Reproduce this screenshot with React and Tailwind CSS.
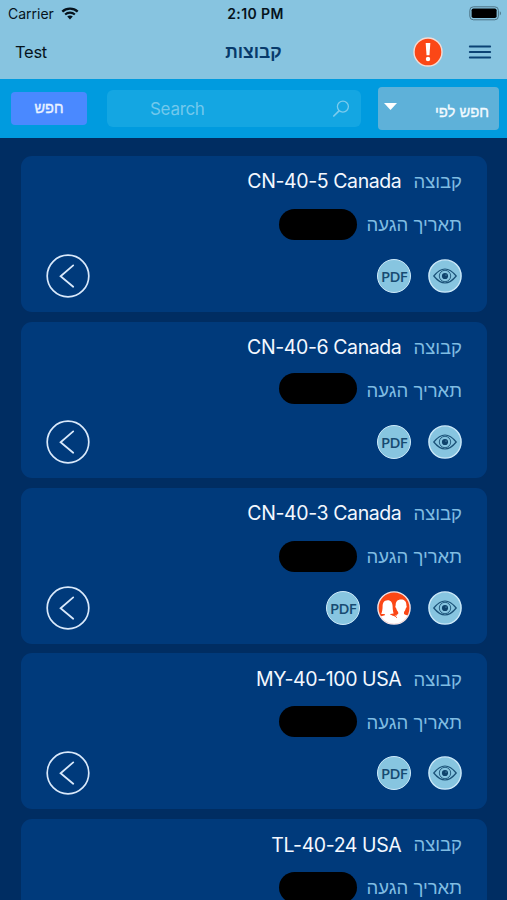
import React, { useState } from 'react';

const groups = [
    { id: 1, name: 'CN-40-5 Canada', hasMembers: false, dateOffset: '' },
    { id: 2, name: 'CN-40-6 Canada', hasMembers: false, dateOffset: 'mb-[3px]' },
    { id: 3, name: 'CN-40-3 Canada', hasMembers: true, dateOffset: '' },
    { id: 4, name: 'MY-40-100 USA', hasMembers: false, dateOffset: '' },
    { id: 5, name: 'TL-40-24 USA', hasMembers: false, dateOffset: '' },
];

const WifiIcon = () => (
    <svg width="18" height="13" viewBox="0 0 18 13" fill="none">
        <path d="M1.3 4.6C5.6 0.6 12.4 0.6 16.7 4.6" stroke="#06131c" strokeWidth="2.3" />
        <path d="M4.1 7.5C6.9 5 11.1 5 13.9 7.5" stroke="#06131c" strokeWidth="2.1" />
        <path d="M9 12.4L6.2 9.6C7.8 8.2 10.2 8.2 11.8 9.6Z" fill="#06131c" />
    </svg>
);

const BatteryIcon = () => (
    <svg width="33" height="15" viewBox="0 0 33 15">
        <rect x="0.8" y="0.8" width="28.6" height="13" rx="3.6" fill="none" stroke="#4d7485" strokeWidth="1" />
        <rect x="2.6" y="2.5" width="25" height="9.6" rx="1.8" fill="#000" />
        <path d="M30.8 5.2C32.3 5.8 32.3 8.8 30.8 9.4Z" fill="#4d7485" />
    </svg>
);

const AlertIcon = () => (
    <svg width="30" height="30" viewBox="0 0 30 30">
        <circle cx="15" cy="15" r="14" fill="#fb4716" stroke="#f3dcd6" strokeWidth="1.4" />
        <path d="M12.7 6H17.3L16.5 18.2H13.5Z" fill="#fff" />
        <circle cx="15" cy="22" r="2.2" fill="#fff" />
    </svg>
);

const MenuIcon = () => (
    <svg width="24" height="16" viewBox="0 0 24 16" stroke="#0b4274" strokeWidth="1.9" strokeLinecap="round">
        <path d="M1.8 2.5H22.2M1.8 8H22.2M1.8 13.5H22.2" />
    </svg>
);

const SearchIcon = () => (
    <svg width="18" height="18" viewBox="0 0 18 18" fill="none" stroke="#7bcbed" strokeWidth="1.3" strokeLinecap="round">
        <circle cx="10.9" cy="6.6" r="5.5" />
        <path d="M7 10.8L1.8 16" strokeWidth="1.7" />
    </svg>
);

const EyeIcon = () => (
    <svg className="shrink-0" width="34" height="34" viewBox="0 0 34 34" fill="none">
        <circle cx="17" cy="17" r="16.1" fill="#87c5e0" stroke="#cdeafa" strokeWidth="1.4" />
        <path d="M5.8 17C10 11.8 13.3 10 17 10C20.7 10 24 11.8 28.2 17C24 22.2 20.7 24 17 24C13.3 24 10 22.2 5.8 17Z" stroke="#1b5278" strokeWidth="1.2" />
        <circle cx="17" cy="17" r="5.7" stroke="#1b5278" strokeWidth="0.9" />
        <circle cx="17" cy="17" r="3.1" fill="#0f436c" />
        <circle cx="18" cy="16" r="0.5" fill="#87c5e0" />
    </svg>
);

const PdfIcon = () => (
    <div dir="ltr" className="flex h-[34px] w-[34px] shrink-0 items-center justify-center rounded-full border-[1.5px] border-[#cdeafa] bg-[#87c5e0]">
        <span className="pt-px font-['Open_Sans'] text-[15px] leading-none font-semibold tracking-[-0.8px] text-[#174b72]">PDF</span>
    </div>
);

const MembersIcon = () => (
    <svg className="shrink-0" width="34" height="34" viewBox="0 0 34 34">
        <defs>
            <clipPath id="members">
                <circle cx="17" cy="17" r="16" />
            </clipPath>
        </defs>
        <circle cx="17" cy="17" r="16.1" fill="#fb4716" />
        <g clipPath="url(#members)" fill="#fff">
            {/* woman */}
            <path d="M10.6 9.2C7 9.2 5.6 12 5.6 15.3C5.6 18 5.2 20.8 4.2 23L7.8 23.1V24.2C5 25 2.5 25.5 0 26V34H18V25L13.3 23.8V23L16.6 22.6C15.9 20.2 15.7 18 15.6 15.3C15.5 11.8 14.2 9.2 10.6 9.2Z" />
            {/* man */}
            <path d="M24 8.6C20.3 8.6 18.5 11 18.7 14.5C17.9 14.8 18.5 17 19.3 17.5C19.6 19 20.4 20 21.2 20.9V23L18 24.4L16.5 34H34V25C31.5 24.5 28.9 24 27 22.9V20.9C27.8 20 28.4 19 28.7 17.5C29.6 17 30.1 14.8 29.3 14.5C29.7 11 27.7 8.6 24 8.6Z" />
        </g>
        <path d="M14.2 23.4L18.2 25.2L20 23.6M18.2 25.2L20 26.8" stroke="#fb4716" strokeWidth="0.9" fill="none" />
        <circle cx="17" cy="17" r="16.1" fill="none" stroke="#f3e3e6" strokeWidth="1.4" />
    </svg>
);

const OpenIcon = () => (
    <svg width="44" height="44" viewBox="0 0 44 44" fill="none" stroke="#d9e9fb" strokeLinecap="round">
        <circle cx="22" cy="22" r="20.8" strokeWidth="1.7" />
        <path d="M27.2 11.4L14.6 22.3L27.2 32.7" strokeWidth="1.8" />
    </svg>
);

const GroupCard = ({ group }) => (
    <div dir="rtl" className="h-[156px] shrink-0 rounded-[11px] bg-[#003a7b] pt-[10px] pr-[25px] pl-[25px]">
        <div className="flex h-8 items-center justify-start gap-3">
            <span className="font-['Liberation_Sans'] text-[18.5px] text-[#7fbce2]">קבוצה</span>
            <span dir="ltr" className="text-[19.5px] tracking-[-0.4px] whitespace-nowrap text-[#f3f8ff]">{group.name}</span>
        </div>
        <div className="mt-[11px] flex h-[31px] items-center gap-[10px]">
            <span className="pt-px font-['Liberation_Sans'] text-[18.5px] whitespace-nowrap text-[#7fbce2]">תאריך הגעה</span>
            <span className={`h-[31px] w-[78px] rounded-full bg-black ${group.dateOffset}`} />
        </div>
        <div className="mt-[14px] flex h-11 items-center justify-between">
            <div className="flex items-center gap-[17px]">
                <EyeIcon />
                {group.hasMembers && <MembersIcon />}
                <PdfIcon />
            </div>
            <button><OpenIcon /></button>
        </div>
    </div>
);

const App = () => {
    const [search, setSearch] = useState('');

    return (
        <div className="flex h-[900px] w-[507px] flex-col overflow-hidden bg-[#002d62] font-[Inter,'Liberation_Sans',sans-serif]">
            <div className="h-[79px] shrink-0 bg-[#87c4e0] text-[#06131c]">
                <div className="grid h-[27px] grid-cols-3 items-center pr-[5px] pl-[8px]">
                    <div className="flex items-center gap-[7px] text-[14px]">
                        <span>Carrier</span>
                        <WifiIcon />
                    </div>
                    <span className="pl-px text-center text-[14px] font-semibold tracking-[0.4px]">2:10 PM</span>
                    <div className="flex justify-end"><BatteryIcon /></div>
                </div>
                <div className="grid h-[50px] grid-cols-3 items-center px-[15px]">
                    <span className="pt-px text-[16.5px] tracking-[-0.3px]">Test</span>
                    <h1 className="text-center font-['Liberation_Sans'] text-[17.5px] font-bold text-[#073a6b]">קבוצות</h1>
                    <div className="flex items-center justify-end gap-[25px]">
                        <AlertIcon />
                        <MenuIcon />
                    </div>
                </div>
            </div>

            <div className="flex h-[59px] shrink-0 items-center bg-[#009bdf] pr-[8px] pl-[11px]">
                <button className="h-[33px] w-[76px] rounded-[4px] bg-[#4a89ff] font-['Liberation_Sans'] text-[14.5px] leading-none text-[#eaf3ff] [-webkit-text-stroke:0.35px]">חפש</button>
                <div className="ml-5 flex h-[37px] w-[254px] items-center rounded-[6px] bg-[#14a6e2] pr-[11px] pl-[43px]">
                    <input
                        className="w-full min-w-0 flex-1 pt-[3px] text-[17px] tracking-[-0.3px] text-white outline-none placeholder:text-[#72c8ec]"
                        placeholder="Search"
                        value={search}
                        onChange={(e) => setSearch(e.target.value)}
                    />
                    <SearchIcon />
                </div>
                <button className="ml-[17px] flex h-[43px] w-[121px] items-center justify-between rounded-[4px] bg-[#5eb1d9] pr-[10px] pl-[6px]">
                    <svg className="mb-[5px]" width="13" height="7" viewBox="0 0 13 7" fill="#fff">
                        <path d="M0 0H13L6.5 7Z" />
                    </svg>
                    <span className="pt-[7px] font-['Liberation_Sans'] text-[14.8px] text-[#f2faff] [-webkit-text-stroke:0.35px]">חפש לפי</span>
                </button>
            </div>

            <div className="flex flex-1 flex-col gap-[9.8px] overflow-hidden pt-[18px] pr-5 pl-[21px]">
                {groups.map((group) => (
                    <GroupCard key={group.id} group={group} />
                ))}
            </div>
        </div>
    );
};

export default App;
